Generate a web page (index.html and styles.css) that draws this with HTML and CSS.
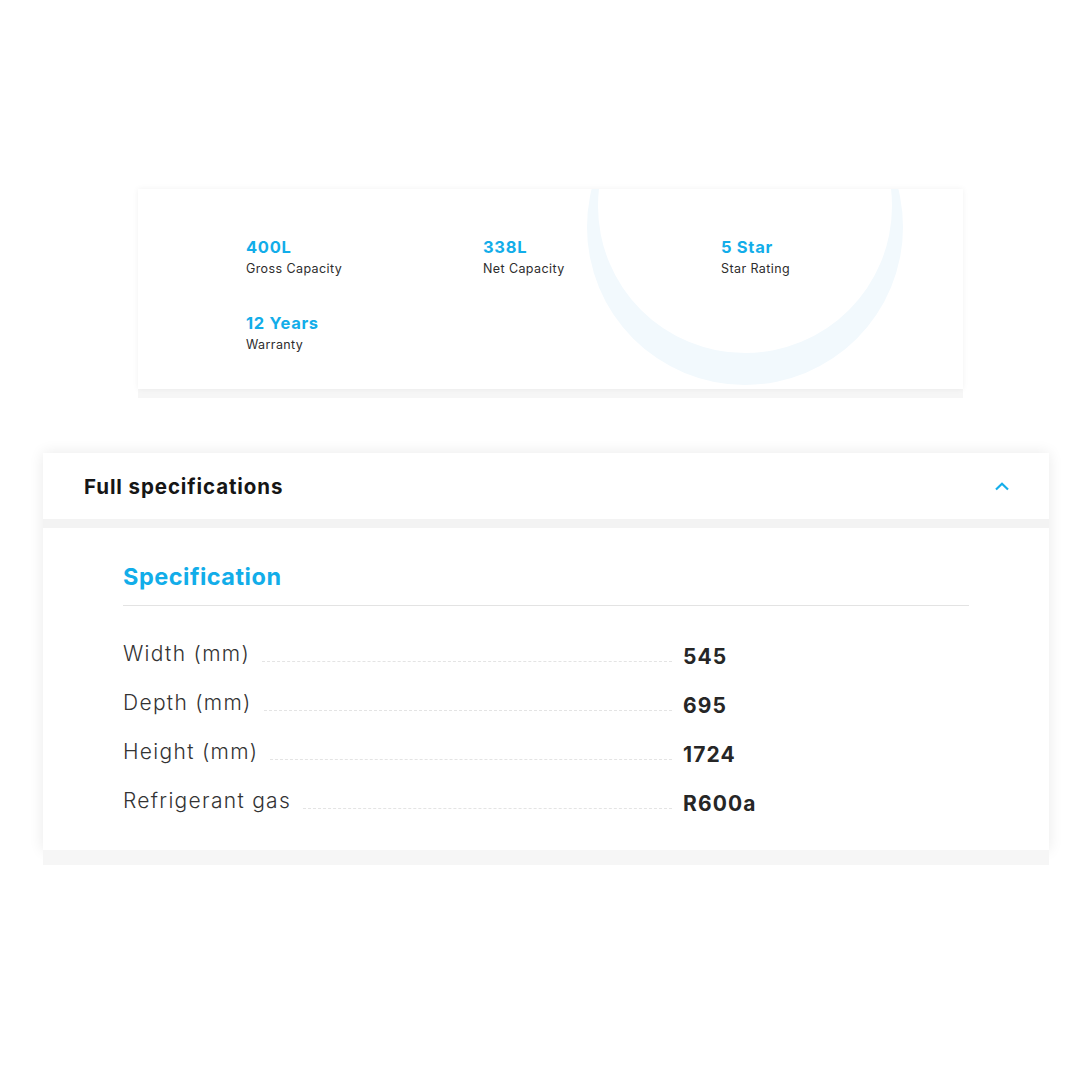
FILE: index.html
```html
<!DOCTYPE html>
<html>
<head>
<meta charset="utf-8">
<link rel="stylesheet" href="styles.css">
</head>
<body>
<div class="page">
  <section class="summary">
    <svg class="deco" width="340" height="200" viewBox="0 0 340 200" aria-hidden="true">
      <path fill-rule="evenodd" fill="#f2f9fd" d="M 0 38 A 158 158 0 1 0 316 38 A 158 158 0 1 0 0 38 Z M 11 17 A 147 147 0 1 0 305 17 A 147 147 0 1 0 11 17 Z"/>
    </svg>
    <div class="stats">
      <div class="stat"><div class="stat-value">400L</div><div class="stat-label">Gross Capacity</div></div>
      <div class="stat"><div class="stat-value">338L</div><div class="stat-label">Net Capacity</div></div>
      <div class="stat"><div class="stat-value">5 Star</div><div class="stat-label">Star Rating</div></div>
      <div class="stat"><div class="stat-value">12 Years</div><div class="stat-label">Warranty</div></div>
    </div>
  </section>
  <div class="under under-1"></div>

  <section class="specs">
    <div class="specs-head">
      <h2 class="specs-title">Full specifications</h2>
      <svg class="chev" width="16" height="10" viewBox="0 0 16 10" aria-hidden="true">
        <path d="M2 8.5 L8 2.8 L14 8.5" fill="none" stroke="#15aeea" stroke-width="2.2"/>
      </svg>
    </div>
    <div class="specs-band"></div>
    <div class="specs-body">
      <h3 class="spec-heading">Specification</h3>
      <div class="spec-rows">
        <div class="spec-row"><span class="spec-label">Width (mm)</span><span class="spec-dots"></span><span class="spec-value">545</span></div>
        <div class="spec-row"><span class="spec-label">Depth (mm)</span><span class="spec-dots"></span><span class="spec-value">695</span></div>
        <div class="spec-row"><span class="spec-label">Height (mm)</span><span class="spec-dots"></span><span class="spec-value">1724</span></div>
        <div class="spec-row"><span class="spec-label">Refrigerant gas</span><span class="spec-dots"></span><span class="spec-value">R600a</span></div>
      </div>
    </div>
  </section>
  <div class="under under-2"></div>
</div>
</body>
</html>
```

FILE: styles.css
```css
* { box-sizing: border-box; }
html, body { margin: 0; padding: 0; background: #fff; }
body { font-family: "Inter", "Lato", "Liberation Sans", sans-serif; color: #2b2b2b; }

.page {
  width: 1080px;
  height: 1080px;
  padding-top: 189px;
  display: flex;
  flex-direction: column;
}

.summary {
  position: relative;
  overflow: hidden;
  margin-left: 138px;
  width: 825px;
  height: 200px;
  background: #fff;
  box-shadow: 0 0 6px rgba(0,0,0,0.06);
}
.deco {
  position: absolute;
  left: 449px;
  top: 0;
}
.stats {
  position: relative;
  display: grid;
  grid-template-columns: 237px 238px 237px;
  row-gap: 35px;
  padding: 48px 0 0 108px;
}
.stat-value {
  font-size: 16.5px;
  font-weight: 700;
  color: #12ade9;
  line-height: 20px;
  letter-spacing: 0.7px;
}
.stat-label {
  font-size: 12.5px;
  color: #2d2d2d;
  line-height: 18px;
  margin-top: 3px;
  letter-spacing: 0.4px;
}

.under {
  background: #f6f6f6;
  height: 9px;
}
.under-1 { margin-left: 138px; width: 825px; }
.under-2 { margin-left: 43px; width: 1006px; height: 15px; }

.specs {
  margin-top: 55px;
  margin-left: 43px;
  width: 1006px;
  background: #fff;
  box-shadow: 0 0 14px rgba(0,0,0,0.09);
}
.specs-head {
  height: 66px;
  display: flex;
  align-items: center;
  justify-content: space-between;
  padding: 0 39px 0 41px;
}
.specs-title {
  margin: 0;
  font-size: 20.5px;
  font-weight: 700;
  color: #161616;
  letter-spacing: 0.9px;
}
.chev { margin-top: 0; }
.specs-band {
  height: 9px;
  background: #f3f3f3;
}
.specs-body {
  padding: 34px 80px 36px 80px;
}
.spec-heading {
  margin: 0;
  font-size: 23.5px;
  font-weight: 700;
  color: #12ade9;
  line-height: 30px;
  padding-bottom: 13px;
  border-bottom: 1px solid #e3e3e3;
  letter-spacing: 0.5px;
}
.spec-rows {
  padding-top: 35px;
  display: flex;
  flex-direction: column;
  gap: 23px;
}
.spec-row {
  display: flex;
  align-items: flex-end;
  height: 26px;
}
.spec-label {
  font-size: 21px;
  font-weight: 300;
  color: #333;
  line-height: 26px;
  white-space: nowrap;
  letter-spacing: 1.3px;
}
.spec-dots {
  flex: 1 1 0;
  border-bottom: 1px dashed #e4e4e4;
  margin: 0 11px 5px 12px;
}
.spec-value {
  flex: none;
  width: 286px;
  font-size: 21px;
  font-weight: 700;
  color: #262626;
  line-height: 26px;
  letter-spacing: 1.1px;
  transform: translateY(3px);
}
```
